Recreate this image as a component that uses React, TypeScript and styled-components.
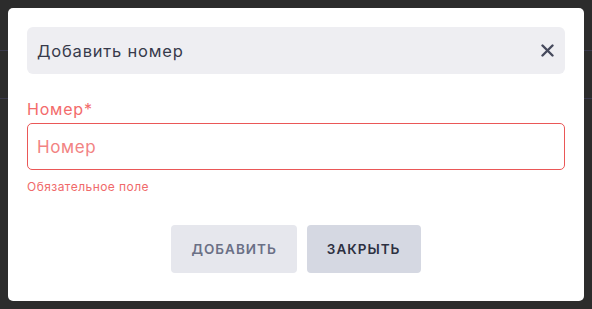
import React from "react";
import styled, { createGlobalStyle } from "styled-components";

const Global = createGlobalStyle`
  html, body { margin: 0; padding: 0; background: #2c2c2c; }
  body { font-family: Inter, "Noto Sans", sans-serif; }
  * { box-sizing: border-box; }
`;

const Page = styled.div`
  position: relative;
  width: 592px;
  height: 309px;
  overflow: hidden;
  background: #2c2c2c;
`;

const Backdrop = styled.div`
  display: flex;
  flex-direction: column;
`;

const BackRow = styled.div<{ $h: number }>`
  height: ${(p) => p.$h}px;
  border-bottom: 1px solid #3a3a4c;
`;

const Overlay = styled.div`
  position: absolute;
  inset: 0;
  padding: 8px;
  display: flex;
`;

const Modal = styled.div`
  flex: 1;
  background: #ffffff;
  border-radius: 5px;
  padding: 19px 19px 28px;
  display: flex;
  flex-direction: column;
`;

const Header = styled.div`
  height: 47px;
  background: #eeeef2;
  border-radius: 6px;
  display: flex;
  align-items: center;
  justify-content: space-between;
  padding: 0 10px 0 10px;
`;

const Title = styled.div`
  font-size: 16.5px;
  color: #373a4b;
  letter-spacing: 0.8px;
`;

const CloseBtn = styled.button`
  border: none;
  background: transparent;
  padding: 0;
  width: 16px;
  height: 16px;
  display: flex;
  align-items: center;
  justify-content: center;
  cursor: pointer;
`;

const Label = styled.div`
  margin-top: 25px;
  font-size: 16px;
  line-height: 20px;
  color: #f36b6b;
  letter-spacing: 0.8px;
`;

const Input = styled.input`
  margin-top: 4px;
  height: 47px;
  border: 1px solid #ea5757;
  border-radius: 5px;
  padding: 0 9px;
  font-family: inherit;
  font-size: 17px;
  letter-spacing: 0.6px;
  color: #333;
  outline: none;
  &::placeholder { color: #f28383; }
`;

const ErrorText = styled.div`
  margin-top: 10px;
  font-size: 12px;
  line-height: 14px;
  letter-spacing: 0.45px;
  color: #f06a6a;
`;

const Actions = styled.div`
  margin-top: auto;
  display: flex;
  justify-content: center;
  gap: 10px;
`;

const Btn = styled.button<{ $variant: "muted" | "primary" }>`
  height: 48px;
  border: none;
  border-radius: 4px;
  padding: 0 20px;
  font-family: inherit;
  font-size: 13.5px;
  font-weight: 600;
  letter-spacing: 1px;
  text-transform: uppercase;
  background: ${(p) => (p.$variant === "muted" ? "#e6e7ed" : "#d5d8e2")};
  color: ${(p) => (p.$variant === "muted" ? "#6b7086" : "#2d3041")};
`;

export default function App() {
  return (
    <Page>
      <Global />
      <Backdrop>
        <BackRow $h={51} />
        <BackRow $h={48} />
      </Backdrop>
      <Overlay>
        <Modal>
          <Header>
            <Title>Добавить номер</Title>
            <CloseBtn aria-label="close">
              <svg width="13" height="13" viewBox="0 0 13 13">
                <path d="M1.5 1.5 L11.5 11.5 M11.5 1.5 L1.5 11.5" stroke="#464a5d" strokeWidth="2.4" strokeLinecap="round" />
              </svg>
            </CloseBtn>
          </Header>
          <Label>Номер*</Label>
          <Input placeholder="Номер" />
          <ErrorText>Обязательное поле</ErrorText>
          <Actions>
            <Btn $variant="muted">Добавить</Btn>
            <Btn $variant="primary">Закрыть</Btn>
          </Actions>
        </Modal>
      </Overlay>
    </Page>
  );
}
